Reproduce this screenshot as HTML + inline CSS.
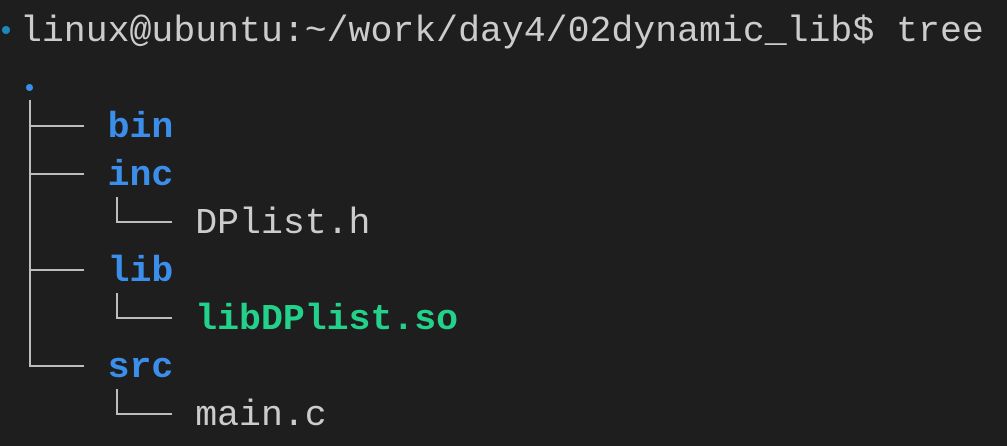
<!DOCTYPE html>
<html><head><style>
html,body{margin:0;padding:0;background:#1e1e1e;width:1007px;height:446px;overflow:hidden}
.l{position:absolute;left:20px;height:48px;line-height:48px;font-family:"Liberation Mono",monospace;font-size:36.5px;color:#cccccc;white-space:pre}
.b{color:#3b8eea;font-weight:bold}
.g{color:#23d18b;font-weight:bold}
.h{position:absolute;height:2px;background:#bdbdbd}
.v{position:absolute;width:2px;background:#bdbdbd}
</style></head><body>
<div style="position:absolute;left:2px;top:26px;width:8px;height:8px;border-radius:50%;background:#1c8ab8"></div>
<div style="position:absolute;left:26px;top:84px;width:7px;height:7px;border-radius:50%;background:#3b8eea"></div>
<div class="l" style="top:8px">linux@ubuntu:~/work/day4/02dynamic_lib$ tree</div>
<div class="l b" style="top:104px">    bin</div>
<div class="l b" style="top:152px">    inc</div>
<div class="l" style="top:200px">        DPlist.h</div>
<div class="l b" style="top:248px">    lib</div>
<div class="l g" style="top:296px">        libDPlist.so</div>
<div class="l b" style="top:344px">    src</div>
<div class="l" style="top:392px">        main.c</div>
<div class="v" style="left:29px;top:100px;height:267px"></div>
<div class="h" style="left:29px;top:125px;width:55px"></div>
<div class="h" style="left:29px;top:173px;width:55px"></div>
<div class="h" style="left:29px;top:269px;width:55px"></div>
<div class="h" style="left:29px;top:365px;width:55px"></div>
<div class="v" style="left:116px;top:197px;height:26px"></div>
<div class="h" style="left:116px;top:221px;width:56px"></div>
<div class="v" style="left:116px;top:293px;height:26px"></div>
<div class="h" style="left:116px;top:317px;width:56px"></div>
<div class="v" style="left:116px;top:389px;height:26px"></div>
<div class="h" style="left:116px;top:413px;width:56px"></div>
</body></html>
